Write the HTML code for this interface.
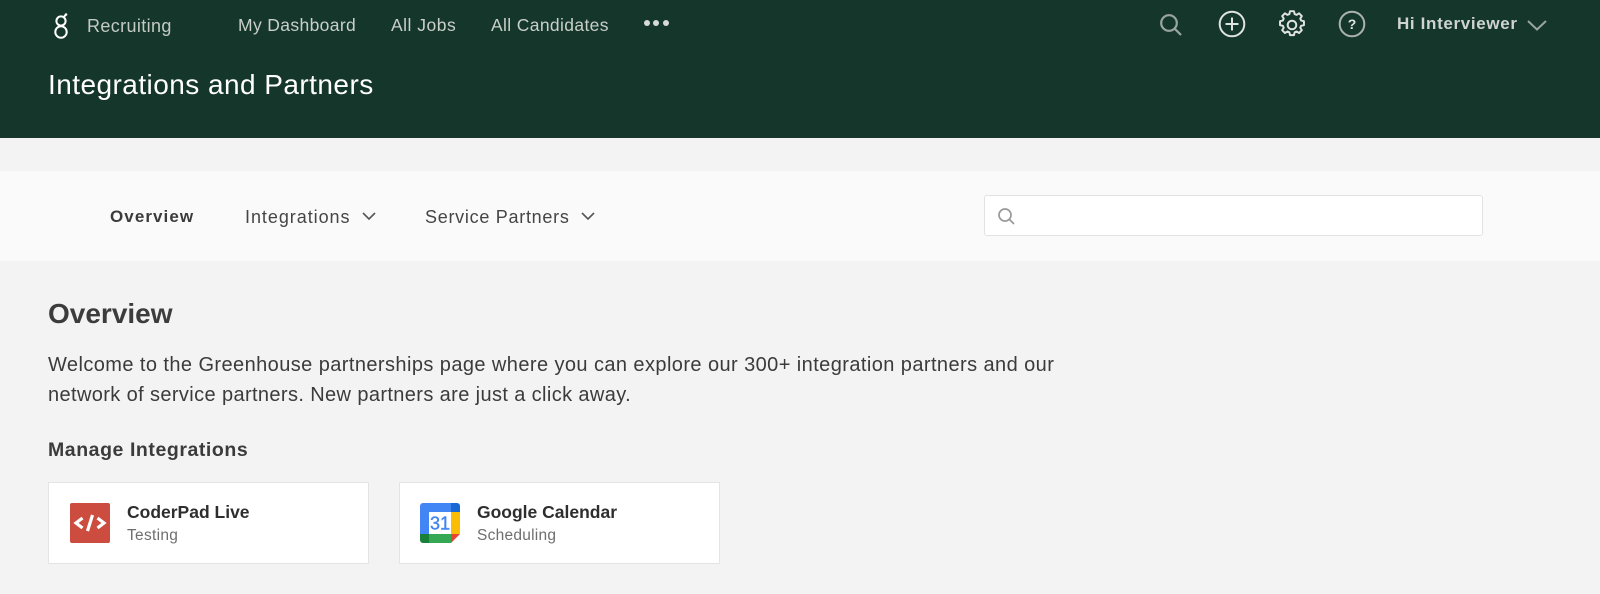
<!DOCTYPE html>
<html><head><meta charset="utf-8"><style>
html,body{margin:0;padding:0}
body{width:1600px;height:594px;position:relative;overflow:hidden;background:#f3f3f3;font-family:"Liberation Sans",sans-serif;color:#3b3b3b}
.t{position:absolute;white-space:nowrap;line-height:1}
svg{position:absolute;overflow:visible}
.nav{color:#c9cfcb;font-size:17.5px;top:17px;letter-spacing:.36px}
</style></head><body>
<div style="position:absolute;left:0;top:0;width:1600px;height:138px;background:#15362b"></div>
<svg style="left:50px;top:10px" width="24" height="30" fill="none" stroke="#fff" stroke-width="2"><circle cx="11" cy="22" r="5.700"/><circle cx="11" cy="11" r="4.600"/><path d="M13.500 7.500 L15.500 5"/><circle cx="16" cy="4.500" r="1.300" fill="#fff" stroke="none"/></svg>
<div class="t" style="left:87px;top:16.500px;font-size:18px;color:#c3cac6;letter-spacing:.37px">Recruiting</div>
<div class="t nav" style="left:238px">My Dashboard</div>
<div class="t nav" style="left:391px;letter-spacing:.5px">All Jobs</div>
<div class="t nav" style="left:491px">All Candidates</div>
<svg style="left:643px;top:18px" width="30" height="10" fill="#d6dad8"><circle cx="4" cy="5" r="3"/><circle cx="13" cy="5" r="3"/><circle cx="23" cy="5" r="3"/></svg>
<div class="t" style="left:48px;top:70.500px;font-size:28px;color:#fff;letter-spacing:.45px">Integrations and Partners</div>
<svg style="left:1158px;top:12px" width="26" height="26" fill="none" stroke="#9aa5a0" stroke-width="2.200"><circle cx="11" cy="11" r="7.800"/><path d="M16.800 16.800 L23 23"/></svg>
<svg style="left:1217px;top:9px" width="30" height="30" fill="none" stroke="#dfe3e1" stroke-width="2"><circle cx="15" cy="15" r="12.300"/><path d="M15 8.500V21.500M8.500 15H21.500"/></svg>
<svg style="left:1277px;top:10px" width="30" height="30" fill="none" stroke="#dfe3e1" stroke-width="2"><circle cx="15" cy="15" r="4.300"/><path d="M12.600 2.800h4.800l.8 3.500 2.400 1 3-1.900 3.400 3.400-1.900 3 1 2.400 3.500.8v4.800l-3.500.8-1 2.400 1.900 3-3.400 3.400-3-1.900-2.400 1-.8 3.500h-4.800l-.8-3.500-2.400-1-3 1.900-3.400-3.400 1.900-3-1-2.400-3.500-.8v-4.800l3.500-.8 1-2.400-1.900-3 3.400-3.400 3 1.900 2.400-1z" transform="translate(15 13) scale(.82) translate(-15 -17.200)" stroke-width="2.400" stroke-linejoin="round"/></svg>
<svg style="left:1337px;top:9px" width="30" height="30" fill="none" stroke="#aab3ae" stroke-width="2"><circle cx="15" cy="15" r="12.300"/><text x="15" y="20" text-anchor="middle" font-family="Liberation Sans" font-size="14" font-weight="700" fill="#dfe3e1" stroke="none">?</text></svg>
<div class="t" style="left:1397px;top:15px;font-size:17px;font-weight:700;color:#cfd4d1;letter-spacing:.65px">Hi Interviewer</div>
<svg style="left:1526px;top:18px" width="22" height="14" fill="none" stroke="#9aa5a0" stroke-width="2"><path d="M2 3 L11 11.500 L20 3"/></svg>

<div style="position:absolute;left:0;top:171px;width:1600px;height:90px;background:#fafafa"></div>
<div class="t" style="left:110px;top:208px;font-size:17px;font-weight:700;color:#3b3b3b;letter-spacing:1.070px">Overview</div>
<div class="t" style="left:245px;top:207.500px;font-size:18px;color:#454545;letter-spacing:.95px">Integrations</div>
<svg style="left:361px;top:211px" width="16" height="10" fill="none" stroke="#555" stroke-width="1.600"><path d="M2 2 L8 8 L14 2"/></svg>
<div class="t" style="left:425px;top:207.500px;font-size:18px;color:#454545;letter-spacing:.72px">Service Partners</div>
<svg style="left:580px;top:211px" width="16" height="10" fill="none" stroke="#555" stroke-width="1.600"><path d="M2 2 L8 8 L14 2"/></svg>
<div style="position:absolute;left:984px;top:195px;width:497px;height:39px;background:#fff;border:1.500px solid #e2e2e2;border-radius:3px"></div>
<svg style="left:997px;top:207px" width="20" height="20" fill="none" stroke="#999" stroke-width="1.700"><circle cx="8" cy="8" r="6"/><path d="M12.500 12.500 L17 17"/></svg>

<div class="t" style="left:48px;top:300px;font-size:28px;font-weight:700;color:#3c3c3c">Overview</div>
<div class="t" style="left:48px;top:355px;font-size:20px;color:#3b3b3b;letter-spacing:.42px">Welcome to the Greenhouse partnerships page where you can explore our 300+ integration partners and our</div>
<div class="t" style="left:48px;top:385px;font-size:20px;color:#3b3b3b;letter-spacing:.38px">network of service partners. New partners are just a click away.</div>
<div class="t" style="left:48px;top:441px;font-size:19.500px;font-weight:700;color:#3b3b3b;letter-spacing:.56px">Manage Integrations</div>

<div style="position:absolute;left:48px;top:482px;width:319px;height:80px;background:#fff;border:1px solid #e4e4e4"></div>
<div style="position:absolute;left:399px;top:482px;width:319px;height:80px;background:#fff;border:1px solid #e4e4e4"></div>
<svg style="left:70px;top:503px" width="40" height="40"><rect width="40" height="40" rx="2" fill="#cc4c3f"/><path d="M12.500 15 L6 20 L12.500 25M27.500 15 L34 20 L27.500 25M22.500 12 L17.500 28" fill="none" stroke="#fff" stroke-width="3.200"/></svg>
<div class="t" style="left:127px;top:503.500px;font-size:17.500px;font-weight:700;color:#2e2e2e">CoderPad Live</div>
<div class="t" style="left:127px;top:527.500px;font-size:15.500px;color:#6e6e6e;letter-spacing:.3px">Testing</div>
<svg style="left:420px;top:503px" width="40" height="40"><path d="M3 0H31V9H9V31H0V3A3 3 0 0 1 3 0Z" fill="#4285f4"/><path d="M31 0H37A3 3 0 0 1 40 3V9H31Z" fill="#1967d2"/><path d="M31 9H40V31H31Z" fill="#fbbc04"/><path d="M9 31H31V40H9Z" fill="#34a853"/><path d="M0 31H9V40H3A3 3 0 0 1 0 37Z" fill="#188038"/><path d="M31 31H40L31 40Z" fill="#ea4335"/><text x="20" y="26.500" text-anchor="middle" font-family="Liberation Sans" font-size="18" fill="#4285f4" stroke="#4285f4" stroke-width=".4">31</text></svg>
<div class="t" style="left:477px;top:503.500px;font-size:17.500px;font-weight:700;color:#2e2e2e">Google Calendar</div>
<div class="t" style="left:477px;top:527.500px;font-size:15.500px;color:#6e6e6e;letter-spacing:.25px">Scheduling</div>
</body></html>
